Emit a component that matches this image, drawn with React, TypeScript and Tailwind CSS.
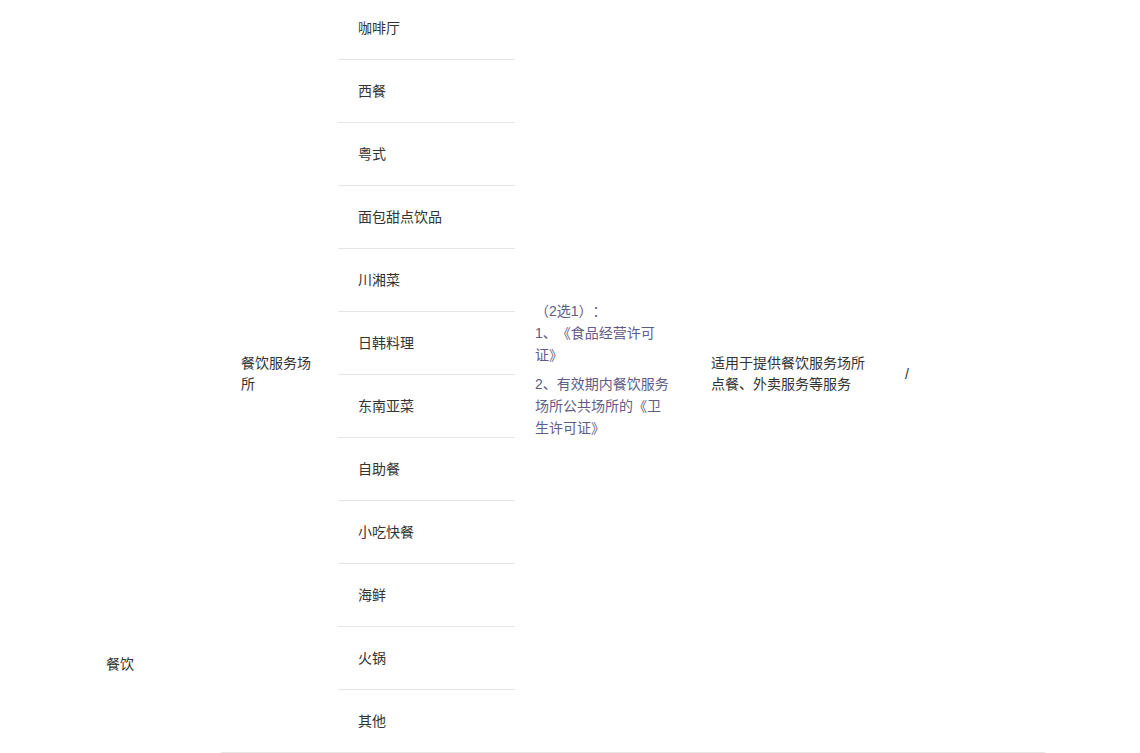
import React from "react";

const items = [
  "咖啡厅",
  "西餐",
  "粤式",
  "面包甜点饮品",
  "川湘菜",
  "日韩料理",
  "东南亚菜",
  "自助餐",
  "小吃快餐",
  "海鲜",
  "火锅",
  "其他",
];

export default function App() {
  return (
    <div
      className="h-[753px] overflow-hidden bg-white text-[14px] text-[#333] [text-spacing-trim:space-all]"
      style={{ fontFamily: '"Liberation Sans", "Noto Sans CJK SC", sans-serif' }}
    >
      <div className="-mt-[3px] ml-[86px] flex w-[959px]">
        <div className="w-[135px] shrink-0 px-5 pt-[656px] leading-[22px]">餐饮</div>
        <div className="flex flex-1 border-b border-[#e5e5e5]">
          <div className="flex w-[117px] shrink-0 items-center px-5 pb-[2px] leading-[21px]">
            餐饮服务场所
          </div>
          <div className="flex w-[177px] shrink-0 flex-col">
            {items.map((t, i) => (
              <div
                key={t}
                className={
                  i < items.length - 1
                    ? "flex h-[63px] items-center border-b border-[#e5e5e5] px-5"
                    : "flex h-[62px] items-center px-5"
                }
              >
                {t}
              </div>
            ))}
          </div>
          <div className="flex w-[176px] shrink-0 flex-col justify-center px-5 pb-[10px] leading-[22px] text-[#5f5c86]">
            <p>（2选1）：</p>
            <p>1、《食品经营许可证》</p>
            <p className="mt-[7px]">2、有效期内餐饮服务场所公共场所的《卫生许可证》</p>
          </div>
          <div className="flex w-[194px] shrink-0 items-center px-5 pb-[2px] leading-[21px]">
            适用于提供餐饮服务场所点餐、外卖服务等服务
          </div>
          <div className="flex flex-1 items-center px-5">/</div>
        </div>
      </div>
    </div>
  );
}
